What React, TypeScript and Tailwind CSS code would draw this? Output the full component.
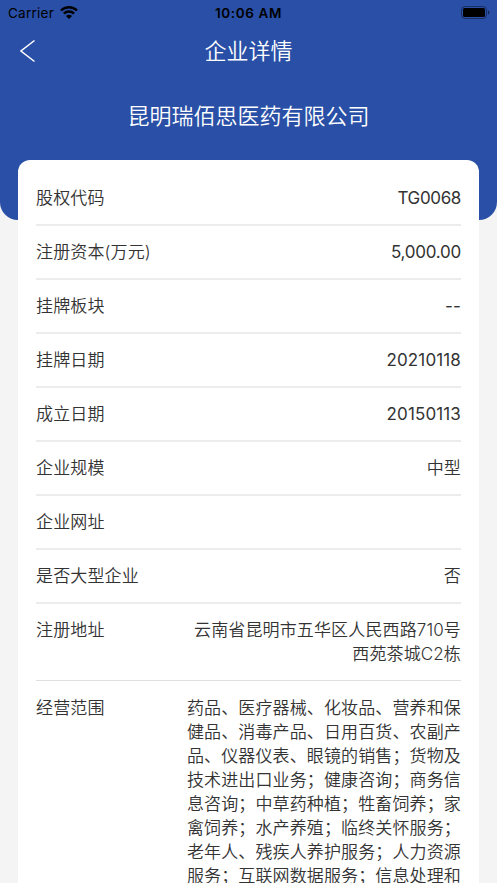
import React from "react";

type Row = { label: string; lines: string[]; text?: string };

const rows: Row[] = [
  { label: "股权代码", lines: ["TG0068"], text: "font-normal tracking-[-0.35px]" },
  { label: "注册资本(万元)", lines: ["5,000.00"], text: "font-normal tracking-[-0.25px]" },
  { label: "挂牌板块", lines: ["--"], text: "font-normal" },
  { label: "挂牌日期", lines: ["20210118"], text: "font-normal" },
  { label: "成立日期", lines: ["20150113"], text: "font-normal" },
  { label: "企业规模", lines: ["中型"] },
  { label: "企业网址", lines: [] },
  { label: "是否大型企业", lines: ["否"] },
  { label: "注册地址", lines: ["云南省昆明市五华区人民西路710号", "西苑茶城C2栋"] },
];

const scope = [
  "药品、医疗器械、化妆品、营养和保",
  "健品、消毒产品、日用百货、农副产",
  "品、仪器仪表、眼镜的销售；货物及",
  "技术进出口业务；健康咨询；商务信",
  "息咨询；中草药种植；牲畜饲养；家",
  "禽饲养；水产养殖；临终关怀服务；",
  "老年人、残疾人养护服务；人力资源",
  "服务；互联网数据服务；信息处理和",
];

export default function App() {
  return (
    <div className="h-[883px] w-[497px] overflow-hidden bg-[#f4f4f4] font-['Inter','Noto_Sans_CJK_SC',sans-serif] text-[#333]">
      <header className="h-[219.5px] rounded-b-[18px] bg-[#294fa6] text-white">
        <div className="grid h-[26px] grid-cols-3 items-center px-2 text-[13.5px] text-black">
          <div className="flex items-center gap-[6px]">
            <span className="tracking-[0.25px]">Carrier</span>
            <svg className="-mt-px" width="18" height="13" viewBox="0 0 18 13" fill="none" stroke="black" strokeWidth="2.4">
              <path d="M1 4.5a11.4 11.4 0 0 1 16 0M3.9 7.6a7.2 7.2 0 0 1 10.2 0" />
              <path d="M6 10a4.2 4.2 0 0 1 6 0l-3 3z" fill="black" stroke="none" />
            </svg>
          </div>
          <span className="text-center font-semibold tracking-[0.6px]">10:06 AM</span>
          <div className="flex items-center justify-end">
            <svg className="-mt-px -mr-px" width="29" height="13" viewBox="0 0 29 13">
              <rect x=".5" y=".5" width="25" height="12" rx="3.5" fill="none" stroke="black" strokeOpacity=".4" />
              <rect x="2" y="2" width="22" height="9" rx="1.5" />
              <path d="M27 4.5q1.5.5 1.5 2T27 8.5z" fillOpacity=".5" />
            </svg>
          </div>
        </div>
        <div className="grid h-[50px] grid-cols-[1fr_auto_1fr] items-center">
          <svg className="ml-5" width="16" height="24" viewBox="0 0 16 24" fill="none" stroke="white" strokeWidth="1.5">
            <path d="M14.5 1.5 1 12l13.5 10.5" />
          </svg>
          <h1 className="text-[22px] leading-none font-[350]">企业详情</h1>
        </div>
        <h2 className="mt-[24px] text-center text-[22px] leading-8 font-[350]">昆明瑞佰思医药有限公司</h2>
      </header>
      <main className="relative mx-[18px] -mt-[59.5px] rounded-t-xl bg-white px-[18px] pt-[12px] text-[17px] leading-6 font-[350] tracking-[0.13px]">
        {rows.map(({ label, lines, text }) => (
          <div key={label} className="flex min-h-[54px] justify-between border-b-2 border-[#ececec] py-[14px] nth-[9]:border-b nth-[9]:border-[#e0e0e0]">
            <span>{label}</span>
            <div className="text-right">
              {lines.map((line) => <p key={line} className={text}>{line}</p>)}
            </div>
          </div>
        ))}
        <div className="flex justify-between pt-[15px]">
          <span>经营范围</span>
          <div>{scope.map((line) => <p key={line} className="whitespace-nowrap">{line}</p>)}</div>
        </div>
      </main>
    </div>
  );
}
